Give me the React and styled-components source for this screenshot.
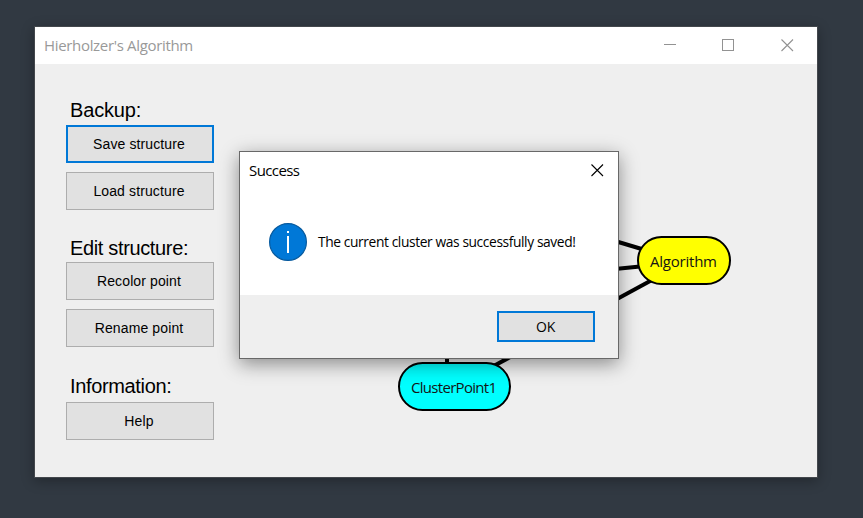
import React from "react";
import styled, { createGlobalStyle } from "styled-components";

const GlobalStyle = createGlobalStyle`
  * { box-sizing: border-box; }
  body { margin: 0; background: #313942; overflow: hidden; }
`;

const uiFont = '"Open Sans", "Noto Sans", sans-serif';

const Desktop = styled.main`
  width: 863px;
  height: 518px;
  padding: 26px 0 0 34px;
  background: #313942;
`;

const Window = styled.section`
  position: relative;
  width: 784px;
  height: 452px;
  border: 1px solid #43474c;
  background: #efefef;
  box-shadow: 0 3px 12px rgba(0, 0, 0, 0.3);
`;

const TitleBar = styled.header`
  display: flex;
  align-items: center;
  justify-content: space-between;
  height: 37px;
  padding: 0 23px 0 9px;
  background: #fff;
`;

const Title = styled.h1`
  margin: 0;
  padding-bottom: 2px;
  font: 400 15px/20px ${uiFont};
  letter-spacing: ${(p) => p.$spacing || 0}px;
  color: ${(p) => p.$color || "#000"};
  white-space: nowrap;
`;

const WindowControls = styled.div`
  display: flex;
  align-items: flex-start;
  gap: 47px;
  svg { display: block; }
  svg:first-child { margin-right: -1px; }
`;

const Content = styled.div`
  display: flex;
  height: 413px;
`;

const Sidebar = styled.nav`
  display: flex;
  flex-direction: column;
  width: 179px;
  padding: 35px 0 0 31px;
`;

const Group = styled.div`
  display: flex;
  flex-direction: column;
  gap: 9px;
  & + & { margin-top: 27px; }
  &:last-child { margin-top: 28px; }
`;

const GroupTitle = styled.h2`
  margin: 0 0 -9px 4px;
  height: ${(p) => p.$height || 26}px;
  font: 400 20px/23px "Liberation Sans", sans-serif;
  letter-spacing: ${(p) => p.$spacing ?? -0.35}px;
  color: #000;
  white-space: nowrap;
`;

const Button = styled.button`
  width: 148px;
  height: 38px;
  padding: 0 2px 0 0;
  border: ${(p) => (p.$focused ? "2px solid #0078d7" : "1px solid #adadad")};
  background: #e1e1e1;
  color: #000;
  font: 400 14px/18px "Liberation Sans", sans-serif;
  letter-spacing: 0.12px;
`;

const OkButton = styled(Button)`
  width: 98px;
  height: 31px;
  padding: 0 1px 0 0;
  font: 400 14px/20px ${uiFont};
  letter-spacing: -0.2px;
`;

const Graph = styled.svg`
  display: block;
  flex: 1;
  height: 413px;
  text {
    font: 400 15px ${uiFont};
    text-anchor: middle;
  }
`;

const Dialog = styled.div`
  position: absolute;
  left: 204px;
  top: 124px;
  display: flex;
  flex-direction: column;
  width: 380px;
  height: 208px;
  border: 1px solid #686868;
  background: #fff;
  box-shadow: 0 5px 18px rgba(0, 0, 0, 0.42);
`;

const DialogHeader = styled.div`
  display: flex;
  align-items: center;
  justify-content: space-between;
  height: 37px;
  padding: 0 14px 0 9px;
`;

const DialogBody = styled.div`
  display: flex;
  align-items: center;
  gap: 11px;
  height: 106px;
  padding: 0 0 0 29px;
  svg { flex: none; }
`;

const Message = styled.p`
  margin: 0;
  font: 400 13.8px/20px ${uiFont};
  letter-spacing: ${(p) => p.$spacing}px;
  white-space: nowrap;
`;

const DialogFooter = styled.div`
  display: flex;
  justify-content: flex-end;
  height: 63px;
  padding: 16px 23px 0 0;
  background: #efefef;
`;

const MinimizeIcon = () => (
  <svg width="12" height="13" stroke="#929292" fill="none">
    <path d="M0 5.5H12" shapeRendering="crispEdges" />
  </svg>
);

const MaximizeIcon = () => (
  <svg width="12" height="12" stroke="#929292" fill="none">
    <rect x="0.5" y="0.5" width="11" height="11" />
  </svg>
);

const CloseIcon = ({ color }) => (
  <svg width="13" height="13" stroke={color} fill="none" strokeWidth="1.1">
    <path d="M0.5 0.5L12 12M12 0.5L0.5 12" />
  </svg>
);

const InfoIcon = () => (
  <svg width="38" height="38">
    <circle cx="19" cy="19" r="18.4" fill="#0078d7" stroke="#075a9e" strokeWidth="1.2" />
    <path d="M18 8h2v2h-2zM18 13h2v17h-2z" fill="#fff" />
  </svg>
);

const Node = ({ x, y, width, color, label, textWidth }) => (
  <g>
    <rect x={x + 1} y={y + 1} width={width - 2} height="47" rx="23.5" fill={color} stroke="#000" strokeWidth="2" />
    <text x={x + width / 2 - 0.5} y={y + 31} textLength={textWidth} fill="#151515">{label}</text>
  </g>
);

export default function App() {
  return (
    <>
      <GlobalStyle />
      <Desktop>
        <Window>
          <TitleBar>
            <Title $color="#999" $spacing={-0.33}>Hierholzer's Algorithm</Title>
            <WindowControls>
              <MinimizeIcon />
              <MaximizeIcon />
              <CloseIcon color="#929292" />
            </WindowControls>
          </TitleBar>
          <Content>
            <Sidebar>
              <Group>
                <GroupTitle $spacing={-0.15}>Backup:</GroupTitle>
                <Button $focused>Save structure</Button>
                <Button>Load structure</Button>
              </Group>
              <Group>
                <GroupTitle $height={25}>Edit structure:</GroupTitle>
                <Button>Recolor point</Button>
                <Button>Rename point</Button>
              </Group>
              <Group>
                <GroupTitle $height={27}>Information:</GroupTitle>
                <Button>Help</Button>
              </Group>
            </Sidebar>
            <Graph viewBox="214 64 603 413">
              <g stroke="#000" strokeWidth="4">
                <path d="M447 250V364" />
                <path d="M490 368L652 280" />
                <path d="M600 236.5L645 250" />
                <path d="M600 270.5L640 266.5" />
              </g>
              <Node x={637} y={236} width={94} color="#ff0" label="Algorithm" textWidth={67} />
              <Node x={398} y={362} width={113} color="#0ff" label="ClusterPoint1" textWidth={86} />
            </Graph>
          </Content>
          <Dialog role="dialog" aria-label="Success">
            <DialogHeader>
              <Title as="h2" $spacing={-0.6}>Success</Title>
              <CloseIcon color="#000" />
            </DialogHeader>
            <DialogBody>
              <InfoIcon />
              <Message $spacing={-0.4}>The current cluster was successfully saved!</Message>
            </DialogBody>
            <DialogFooter>
              <OkButton $focused>OK</OkButton>
            </DialogFooter>
          </Dialog>
        </Window>
      </Desktop>
    </>
  );
}
